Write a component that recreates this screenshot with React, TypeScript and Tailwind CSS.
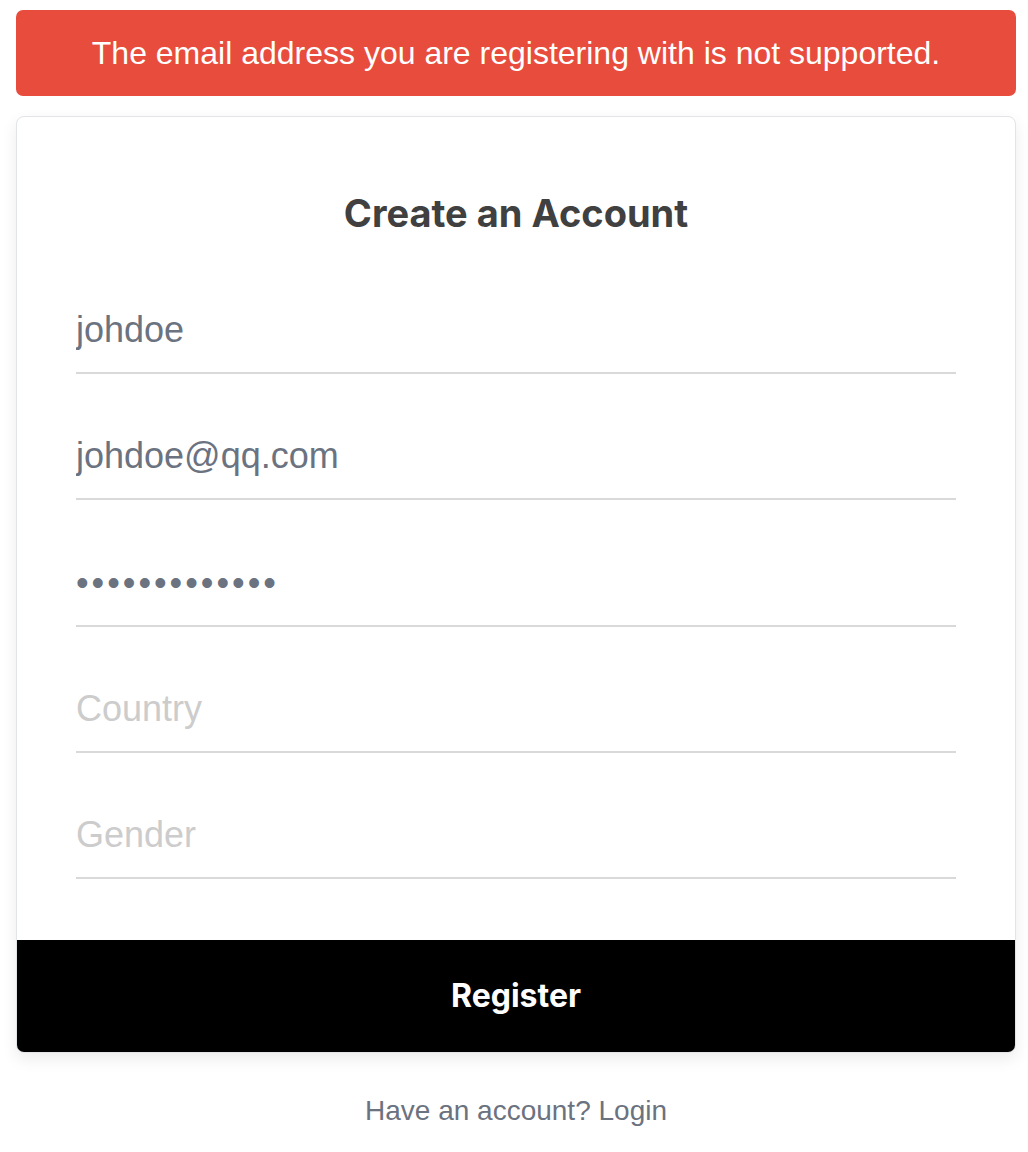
import React from 'react';

const fields = [
  { type: 'text', value: 'johdoe', placeholder: 'Username' },
  { type: 'email', value: 'johdoe@qq.com', placeholder: 'Email' },
  { type: 'password', value: 'supersecret12', placeholder: 'Password' },
  { type: 'text', value: '', placeholder: 'Country' },
  { type: 'text', value: '', placeholder: 'Gender' },
];

export default function App() {
  return (
    <div className="min-h-screen bg-white pt-[10px] font-['Liberation_Sans',Arial,sans-serif]">
      <div className="ml-4 w-[1000px]">
        {/* error banner */}
        <div className="flex h-[86px] items-center justify-center rounded-[7px] bg-[#e74c3c] text-[32px] text-white">
          The email address you are registering with is not supported.
        </div>

        {/* card */}
        <div className="mt-5 overflow-hidden rounded-[8px] border border-[#e2e4e8] bg-white shadow-[0_6px_16px_rgba(0,0,0,0.08)]">
          <div className="px-[59px] pt-[72px] pb-[61px]">
            <h1 className="text-center font-['Inter',sans-serif] text-[38px] font-bold leading-[48px] text-[#404040]">
              Create an Account
            </h1>
            <form className="mt-[51px] flex flex-col gap-[40.25px]">
              {fields.map(f => (
                <input
                  key={f.placeholder}
                  type={f.type}
                  defaultValue={f.value}
                  placeholder={f.placeholder}
                  className={`h-[86px] w-full border-b-2 border-[#d9d9d9] bg-transparent text-[36px] text-[#6b7280] outline-none placeholder:text-[#cccccc] ${
                    f.type === 'password' ? 'tracking-[3px]' : ''
                  }`}
                />
              ))}
            </form>
          </div>
          <button className="flex h-[112px] w-full items-center justify-center bg-black font-['Inter',sans-serif] text-[32px] font-bold text-white">
            Register
          </button>
        </div>

        <p className="mt-[37px] text-center text-[28px] leading-[42px] text-[#6b7280]">
          Have an account? Login
        </p>
      </div>
    </div>
  );
}
